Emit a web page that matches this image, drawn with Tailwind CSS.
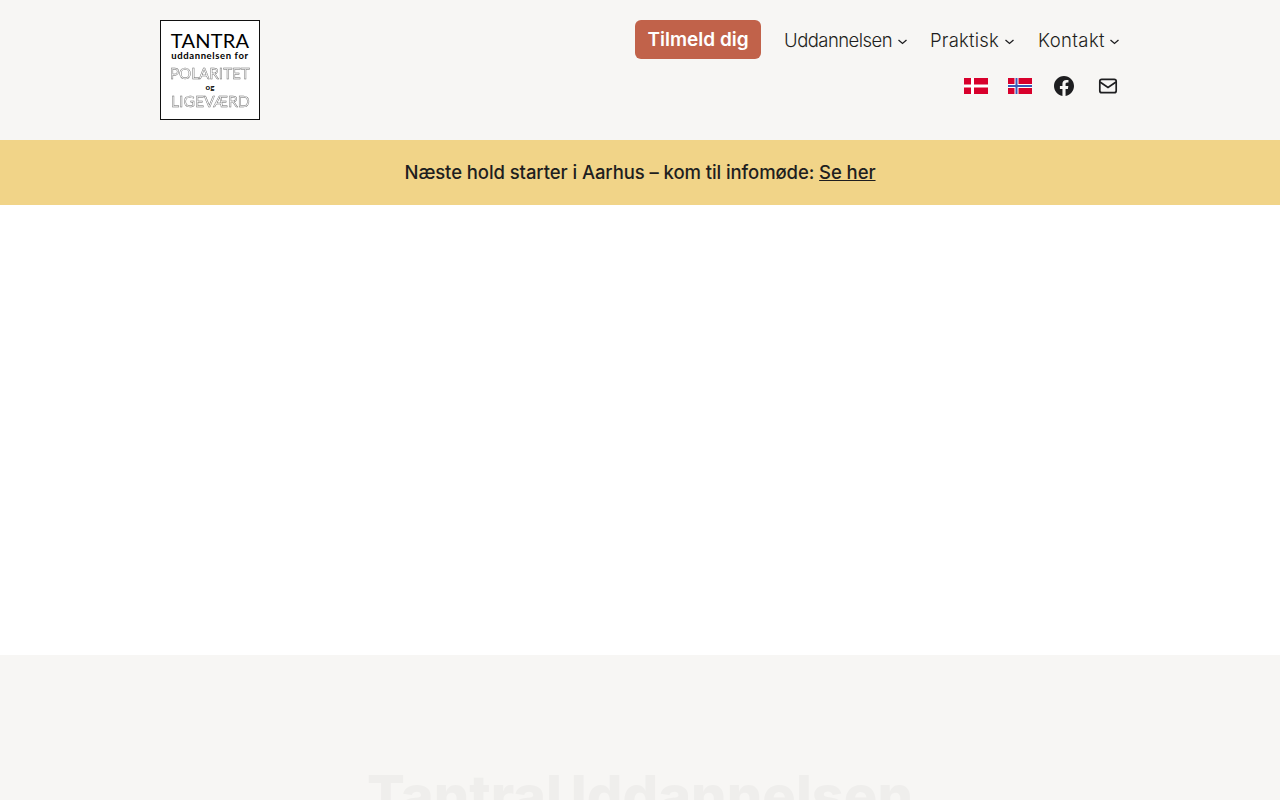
<!DOCTYPE html>
<html lang="da">
<head>
    <meta charset="UTF-8">
    <meta name="viewport" content="width=device-width, initial-scale=1.0">
    <title>TantraUddannelsen</title>
    <script src="https://cdn.jsdelivr.net/npm/@tailwindcss/browser@4"></script>
</head>
<body class="bg-white h-[800px] overflow-hidden font-['Inter',sans-serif] text-[#1e1e20]">
    <!-- Header -->
    <header class="bg-[#f7f6f4] h-[140px]">
        <div class="w-[960px] mx-auto pt-5 flex justify-between">
            <a href="#" class="w-[100px] h-[100px] bg-white border border-[#111] flex flex-col items-center text-black pt-[9px]">
                <span class="font-['Lato',sans-serif] text-[20px] leading-[20px] tracking-[0.2px] whitespace-nowrap">TANTRA</span>
                <span class="font-['Lato',sans-serif] font-bold text-[9.5px] leading-[10px] mt-[1px] tracking-[0.6px] whitespace-nowrap">uddannelsen for</span>
                <span class="font-['Lato',sans-serif] text-[15.2px] leading-[17px] mt-[4px] text-transparent [will-change:transform] [-webkit-text-stroke:0.45px_#666] whitespace-nowrap">POLARITET</span>
                <span class="font-['Lato',sans-serif] font-bold text-[8px] leading-[8px] mt-[1px]">og</span>
                <span class="font-['Lato',sans-serif] text-[15.7px] leading-[17px] mt-[2px] text-transparent [will-change:transform] [-webkit-text-stroke:0.45px_#666] whitespace-nowrap">LIGEVÆRD</span>
            </a>
            <div class="flex flex-col items-end">
                <nav class="flex items-center h-[39px] text-[18.5px] font-light tracking-[0.4px]">
                    <a href="#" class="bg-[#c1624a] text-white text-[19px] font-semibold tracking-[0px] rounded-md h-[39px] w-[126px] pt-[1px] flex items-center justify-center mr-[23px]">Tilmeld dig</a>
                    <a href="#" class="flex items-center pt-[2px] tracking-[-0.55px]">Uddannelsen
                        <svg class="w-[11px] h-[11px] ml-[5px] mt-[1px]" viewBox="0 0 11 11" fill="none" stroke="currentColor" stroke-width="1.3"><path d="M1.5 4l4 3.5 4-3.5"/></svg>
                    </a>
                    <a href="#" class="flex items-center pt-[2px] ml-[22px] tracking-[0.2px]">Praktisk
                        <svg class="w-[11px] h-[11px] ml-[5px] mt-[1px]" viewBox="0 0 11 11" fill="none" stroke="currentColor" stroke-width="1.3"><path d="M1.5 4l4 3.5 4-3.5"/></svg>
                    </a>
                    <a href="#" class="flex items-center pt-[2px] ml-[23px]">Kontakt
                        <svg class="w-[11px] h-[11px] ml-[4px] mt-[1px]" viewBox="0 0 11 11" fill="none" stroke="currentColor" stroke-width="1.3"><path d="M1.5 4l4 3.5 4-3.5"/></svg>
                    </a>
                </nav>
                <div class="flex items-center mt-[15px] h-[24px]">
                    <!-- Denmark -->
                    <svg class="w-6 h-[18px]" viewBox="0 0 24 18"><rect y="1" width="24" height="16" fill="#d8002c"/><rect x="7" y="1" width="3" height="16" fill="#fff"/><rect y="7.5" width="24" height="3" fill="#fff"/></svg>
                    <!-- Norway -->
                    <svg class="w-6 h-[18px] ml-5" viewBox="0 0 24 18"><rect y="1" width="24" height="16" fill="#d8002c"/><rect x="6.5" y="1" width="4" height="16" fill="#fff"/><rect y="7" width="24" height="4" fill="#fff"/><rect x="7.5" y="1" width="2" height="16" fill="#3a5bb8"/><rect y="8" width="24" height="2" fill="#3a5bb8"/></svg>
                    <!-- Facebook -->
                    <svg class="w-6 h-6 ml-5" viewBox="0 0 24 24" fill="currentColor"><path d="M22 12c0-5.52-4.48-10-10-10S2 6.48 2 12c0 4.99 3.66 9.13 8.44 9.88v-6.99H7.9V12h2.54V9.8c0-2.51 1.49-3.89 3.78-3.89 1.09 0 2.24.2 2.24.2v2.46h-1.26c-1.24 0-1.63.77-1.63 1.56V12h2.77l-.44 2.89h-2.33v6.99C18.34 21.13 22 16.99 22 12z"/></svg>
                    <!-- Mail -->
                    <svg class="w-6 h-6 ml-5" viewBox="0 0 24 24" fill="none" stroke="currentColor" stroke-width="1.7"><rect x="3.8" y="5.3" width="16.4" height="13.4" rx="2"/><path d="M4 8l8 5.5L20 8"/></svg>
                </div>
            </div>
        </div>
    </header>

    <!-- Banner -->
    <div class="bg-[#f1d488] h-[65px] pt-[1px] flex items-center justify-center text-[18.5px] font-medium tracking-[-0.08px]">
        <p>Næste hold starter i Aarhus – kom til infomøde: <a href="#" class="underline">Se her</a></p>
    </div>

    <main class="h-[450px] bg-white"></main>

    <footer class="bg-[#f7f6f4] h-[145px] overflow-hidden pt-[113px] text-center">
        <h2 class="text-[#efeeec] font-extrabold text-[56px] leading-[56px]">TantraUddannelsen</h2>
    </footer>
</body>
</html>
